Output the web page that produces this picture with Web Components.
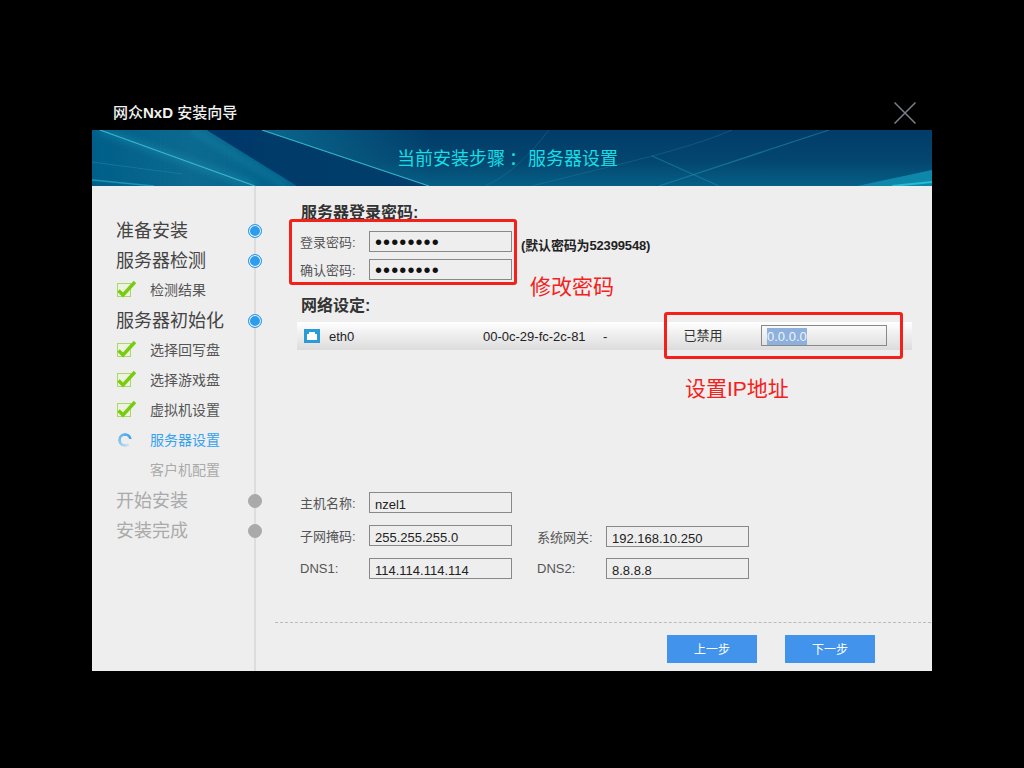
<!DOCTYPE html>
<html lang="zh">
<head>
<meta charset="utf-8">
<title>网众NxD 安装向导</title>
<style>
html, body { margin: 0; height: 100%; background: #000; }
body { font-family: "Liberation Sans", "Noto Sans CJK SC", sans-serif; }
</style>
</head>
<body>
<nxd-wizard>
  <span slot="heading">网众<b>NxD</b> 安装向导</span>
  <nxd-banner slot="banner">当前安装步骤<span style="padding-left:4px;word-spacing:-4px">： </span>服务器设置</nxd-banner>

  <nxd-step slot="steps" level="top" state="done">准备安装</nxd-step>
  <nxd-step slot="steps" level="top" state="done">服务器检测</nxd-step>
  <nxd-step slot="steps" level="sub" state="done">检测结果</nxd-step>
  <nxd-step slot="steps" level="top" state="done">服务器初始化</nxd-step>
  <nxd-step slot="steps" level="sub" state="done">选择回写盘</nxd-step>
  <nxd-step slot="steps" level="sub" state="done">选择游戏盘</nxd-step>
  <nxd-step slot="steps" level="sub" state="done">虚拟机设置</nxd-step>
  <nxd-step slot="steps" level="sub" state="active">服务器设置</nxd-step>
  <nxd-step slot="steps" level="sub" state="todo">客户机配置</nxd-step>
  <nxd-step slot="steps" level="top" state="todo">开始安装</nxd-step>
  <nxd-step slot="steps" level="top" state="todo">安装完成</nxd-step>

  <nxd-server-form></nxd-server-form>
</nxd-wizard>

<template id="wizard-tpl">
<style>
:host { display: block; width: 840px; margin-left: 92px; padding-top: 90px; }
.title {
  display: flex;
  align-items: center;
  justify-content: space-between;
  height: 40px;
  box-sizing: border-box;
  padding: 6px 16px 0 21px;
  color: #f2f2f2;
  font-size: 15px;
  font-weight: 500;
  line-height: 20px;
}
.close { display: block; width: 22px; height: 22px; }
.body { display: flex; height: 485px; background: #eee; }
.steps {
  flex: none;
  width: 164px;
  box-sizing: border-box;
  padding-top: 28px;
  border-right: 2px solid #ddd;
}
.main { flex: 1; min-width: 0; }
</style>
<div class="title">
  <slot name="heading"></slot>
  <svg class="close" viewBox="0 0 22 22"><path d="M.5.5l21 21M21.5.5l-21 21" fill="none" stroke="#7b7f8d" stroke-width="1.5"/></svg>
</div>
<slot name="banner"></slot>
<div class="body">
  <div class="steps"><slot name="steps"></slot></div>
  <div class="main"><slot></slot></div>
</div>
</template>

<template id="banner-tpl">
<style>
:host { display: block; position: relative; height: 56px; overflow: hidden; background: #033c68; }
svg { position: absolute; inset: 0; width: 100%; height: 100%; }
.text {
  position: relative;
  height: 56px;
  box-sizing: border-box;
  padding: 1px 0 0 305px;
  color: #14dfe6;
  font-size: 18px;
  line-height: 56px;
}
</style>
<svg viewBox="0 0 840 56" preserveAspectRatio="none">
  <defs>
    <linearGradient id="base" x1="0" x2="0" y1="0" y2="1">
      <stop offset="0" stop-color="#023c68"/>
      <stop offset=".55" stop-color="#03466f"/>
      <stop offset="1" stop-color="#065f86"/>
    </linearGradient>
    <linearGradient id="left" x1="0" x2="205" y1="0" y2="0" gradientUnits="userSpaceOnUse">
      <stop offset="0" stop-color="#065f88"/>
      <stop offset=".5" stop-color="#076a90"/>
      <stop offset="1" stop-color="#06628a"/>
    </linearGradient>
    <linearGradient id="dark" x1="115" x2="337" y1="0" y2="0" gradientUnits="userSpaceOnUse">
      <stop offset="0" stop-color="#02386a"/>
      <stop offset="1" stop-color="#033f6c"/>
    </linearGradient>
    <linearGradient id="after" x1="170" x2="340" y1="0" y2="0" gradientUnits="userSpaceOnUse">
      <stop offset="0" stop-color="#0b6c92" stop-opacity=".9"/>
      <stop offset="1" stop-color="#0b6c92" stop-opacity="0"/>
    </linearGradient>
    <filter id="soft" x="-5%" y="-20%" width="110%" height="140%"><feGaussianBlur stdDeviation=".6"/></filter>
    <filter id="glow" x="-5%" y="-20%" width="110%" height="140%"><feGaussianBlur stdDeviation="3"/></filter>
  </defs>
  <rect width="840" height="56" fill="url(#base)"/>
  <polygon points="0,0 115,0 205,56 0,56" fill="url(#left)" filter="url(#soft)"/>
  <polygon points="115,0 170,0 337,56 205,56" fill="url(#dark)" filter="url(#soft)"/>
  <polygon points="170,0 360,0 420,30 337,56" fill="url(#after)"/>
  <!-- soft glows beside the two long streaks -->
  <path d="M8 0L163 56" stroke="#2aa8c4" stroke-width="8" opacity=".25" filter="url(#glow)"/>
  <path d="M100 0L195 56" stroke="#2aa8c4" stroke-width="6" opacity=".2" filter="url(#glow)"/>
  <path d="M8 0L163 56" stroke="#38b8cf" stroke-width="1.2" filter="url(#soft)"/>
  <path d="M170 0L337 56" stroke="#36b4cc" stroke-width="1.2" filter="url(#soft)"/>
  <path d="M0 32L90 44" stroke="#1d8aac" stroke-width="1" opacity=".5" filter="url(#soft)"/>
  <path d="M0 50L62 56" stroke="#2aa8c4" stroke-width="1.5" opacity=".7" filter="url(#soft)"/>
  <!-- faint arcs under the caption -->
  <path d="M457 0C438 24 420 44 393 56M640 0C590 22 500 40 440 56" fill="none" stroke="#2a90b0" stroke-width="1" opacity=".3" filter="url(#soft)"/>
  <path d="M737 0L567 56" stroke="#1e8cac" stroke-width="1.2" opacity=".6" filter="url(#soft)"/>
  <path d="M560 26L627 56" stroke="#1e8cac" stroke-width="1.2" opacity=".55" filter="url(#soft)"/>
  <polygon points="765,56 840,40 840,56" fill="#0f88aa" filter="url(#soft)"/>
  <path d="M800 56L840 52" stroke="#27bdd4" stroke-width="2" filter="url(#soft)"/>
</svg>
<div class="text"><slot></slot></div>
</template>

<template id="step-tpl">
<style>
:host {
  display: flex;
  align-items: center;
  height: 30px;
  padding-left: 24px;
  color: #444;
  font-size: 18px;
}
:host([level="sub"]) { font-size: 14px; color: #555; }
:host([state="active"]) { color: #36a2ee; }
:host([state="todo"]) { color: #aaa; }
.mark { flex: none; display: none; width: 34px; height: 18px; }
:host([level="sub"]) .mark { display: block; }
.spinner {
  display: none;
  width: 14px;
  height: 14px;
  margin: 3px 0 0 2px;
  border-radius: 50%;
  background: conic-gradient(from 140deg, rgb(54 162 238 / 15%), rgb(54 162 238 / 55%) 110deg, rgb(54 162 238) 300deg, transparent 300deg);
  -webkit-mask: radial-gradient(circle, transparent 4px, #000 4.5px);
  mask: radial-gradient(circle, transparent 4px, #000 4.5px);
}
.tick { display: none; overflow: visible; }
:host([state="done"]) .tick { display: block; }
:host([state="active"]) .spinner { display: block; }
.label { flex: 1; }
.dot {
  flex: none;
  width: 14px;
  height: 14px;
  box-sizing: border-box;
  margin: 4px -8px 0 0;
  border-radius: 50%;
  border: 1px solid #2e9cea;
  background: #2e9cea;
  box-shadow: inset 0 0 0 1px #fff;
}
:host([level="sub"]) .dot { display: none; }
:host([state="todo"]) .dot { background: #aaa; border-color: #aaa; box-shadow: none; }
</style>
<div class="mark">
  <svg class="tick" width="20" height="18" viewBox="0 0 20 18">
    <rect x="1.5" y="3.5" width="13" height="13" fill="#eef3e0" stroke="#a9d96a"/>
    <path d="M2.5 10.5L7 15L19 2" fill="none" stroke="#78cc10" stroke-width="3.4"/>
  </svg>
  <div class="spinner"></div>
</div>
<span class="label"><slot></slot></span>
<span class="dot"></span>
</template>

<template id="field-tpl">
<style>
:host { display: flex; align-items: center; color: #555; font-size: 13px; }
.label { flex: none; width: 69px; margin-left: -1px; }
.box {
  flex: none;
  width: 143px;
  height: 21px;
  box-sizing: border-box;
  padding: 3px 0 0 5px;
  border: 1px solid #888;
  color: #222;
  line-height: 18px;
}
:host([type="password"]) .box {
  padding-top: 1px;
  color: #111;
  font-size: 20px;
  letter-spacing: 1.1px;
}
</style>
<span class="label"></span>
<div class="box"></div>
</template>

<template id="nic-tpl">
<style>
:host {
  display: flex;
  align-items: center;
  width: 615px;
  height: 28px;
  box-sizing: border-box;
  padding-left: 7px;
  background: linear-gradient(#fff, #f2f2f2 35%, #dcdcdc);
  color: #222;
  font-size: 13px;
}
svg { flex: none; width: 16px; height: 14px; margin-right: 9px; }
.name { width: 154px; }
.mac { width: 120px; }
.dash { width: 81px; }
.state { width: 77.5px; margin: -4px 0 0 -.5px; color: #333; }
.ip {
  flex: none;
  width: 126px;
  height: 21px;
  box-sizing: border-box;
  margin: -2px 0 0 0;
  padding: 2px 0 0 5px;
  border: 1px solid #888;
  line-height: 18px;
}
.ip span { display: inline-block; background: #8db0dc; color: #eef4fb; line-height: 17px; }
</style>
<svg viewBox="0 0 16 14">
  <rect width="16" height="14" fill="#2a9ad8"/>
  <path d="M3 5h2V3h6v2h2v6H3z" fill="#fff"/>
</svg>
<span class="name"></span>
<span class="mac"></span>
<span class="dash">-</span>
<span class="state"></span>
<div class="ip"><span></span></div>
</template>

<template id="button-tpl">
<style>
:host {
  display: flex;
  align-items: center;
  justify-content: center;
  width: 90px;
  height: 28px;
  box-sizing: border-box;
  padding-bottom: 2px;
  background: #4193ec;
  color: #fff;
  font-size: 12px;
  cursor: pointer;
}
</style>
<slot></slot>
</template>

<template id="form-tpl">
<style>
:host { display: block; position: relative; height: 485px; box-sizing: border-box; padding: 18px 0 0 45px; }
h2 { margin: 0; color: #333; font-size: 16px; font-weight: 700; line-height: 18px; }
.pw { display: flex; flex-direction: column; gap: 7px; margin-top: 9px; }
.pw-row { display: flex; align-items: center; gap: 9px; height: 21px; }
.hint { color: #222; font-size: 13px; font-weight: 700; line-height: 15px; margin-top: 8px; letter-spacing: -.15px; }
.net { margin-top: 17px; }
nxd-nic { margin: 7px 0 0 -4px; }
.host { display: grid; grid-template-columns: 211px 211px; column-gap: 26px; row-gap: 12px; margin-top: 142px; }
.rule { margin: 43px 1px 0 -26px; border-top: 1px dashed #bbb; }
.foot { display: flex; gap: 28px; margin: 12px 0 0 366px; }
.mark-box { position: absolute; box-sizing: border-box; border: 3px solid #f5201a; border-radius: 3px; }
.mark-text { position: absolute; color: #f5201a; font-size: 21px; line-height: 28px; white-space: nowrap; }
</style>
<h2>服务器登录密码:</h2>
<div class="pw">
  <div class="pw-row">
    <nxd-field label="登录密码:" value="••••••••" type="password"></nxd-field>
    <span class="hint">(默认密码为52399548)</span>
  </div>
  <nxd-field label="确认密码:" value="••••••••" type="password"></nxd-field>
</div>
<h2 class="net">网络设定:</h2>
<nxd-nic name="eth0" mac="00-0c-29-fc-2c-81" state="已禁用" ip="0.0.0.0"></nxd-nic>
<div class="host">
  <nxd-field label="主机名称:" value="nzel1"></nxd-field>
  <span></span>
  <nxd-field label="子网掩码:" value="255.255.255.0"></nxd-field>
  <nxd-field label="系统网关:" value="192.168.10.250" style="margin:1px 0 -1px"></nxd-field>
  <nxd-field label="DNS1:" value="114.114.114.114"></nxd-field>
  <nxd-field label="DNS2:" value="8.8.8.8"></nxd-field>
</div>
<div class="rule"></div>
<div class="foot">
  <nxd-button>上一步</nxd-button>
  <nxd-button>下一步</nxd-button>
</div>

<!-- red notes drawn over the form -->
<div class="mark-box" style="left:33px;top:33px;width:228px;height:66px"></div>
<div class="mark-text" style="left:274px;top:87px">修改密码</div>
<div class="mark-box" style="left:408px;top:126px;width:239px;height:47px"></div>
<div class="mark-text" style="left:429px;top:189px">设置IP地址</div>
</template>

<script>
function stamp(host, id) {
  const root = host.attachShadow({ mode: 'open' });
  root.appendChild(document.getElementById(id).content.cloneNode(true));
  return root;
}

class NxdWizard extends HTMLElement {
  constructor() { super(); stamp(this, 'wizard-tpl'); }
}

class NxdBanner extends HTMLElement {
  constructor() { super(); stamp(this, 'banner-tpl'); }
}

class NxdStep extends HTMLElement {
  constructor() { super(); stamp(this, 'step-tpl'); }
}

class NxdField extends HTMLElement {
  connectedCallback() {
    if (this.shadowRoot) return;
    const root = stamp(this, 'field-tpl');
    root.querySelector('.label').textContent = this.getAttribute('label');
    root.querySelector('.box').textContent = this.getAttribute('value');
  }
}

class NxdNic extends HTMLElement {
  connectedCallback() {
    if (this.shadowRoot) return;
    const root = stamp(this, 'nic-tpl');
    root.querySelector('.name').textContent = this.getAttribute('name');
    root.querySelector('.mac').textContent = this.getAttribute('mac');
    root.querySelector('.state').textContent = this.getAttribute('state');
    root.querySelector('.ip span').textContent = this.getAttribute('ip');
  }
}

class NxdButton extends HTMLElement {
  constructor() { super(); stamp(this, 'button-tpl'); }
}

class NxdServerForm extends HTMLElement {
  constructor() { super(); stamp(this, 'form-tpl'); }
}

customElements.define('nxd-wizard', NxdWizard);
customElements.define('nxd-banner', NxdBanner);
customElements.define('nxd-step', NxdStep);
customElements.define('nxd-field', NxdField);
customElements.define('nxd-nic', NxdNic);
customElements.define('nxd-button', NxdButton);
customElements.define('nxd-server-form', NxdServerForm);
</script>
</body>
</html>
